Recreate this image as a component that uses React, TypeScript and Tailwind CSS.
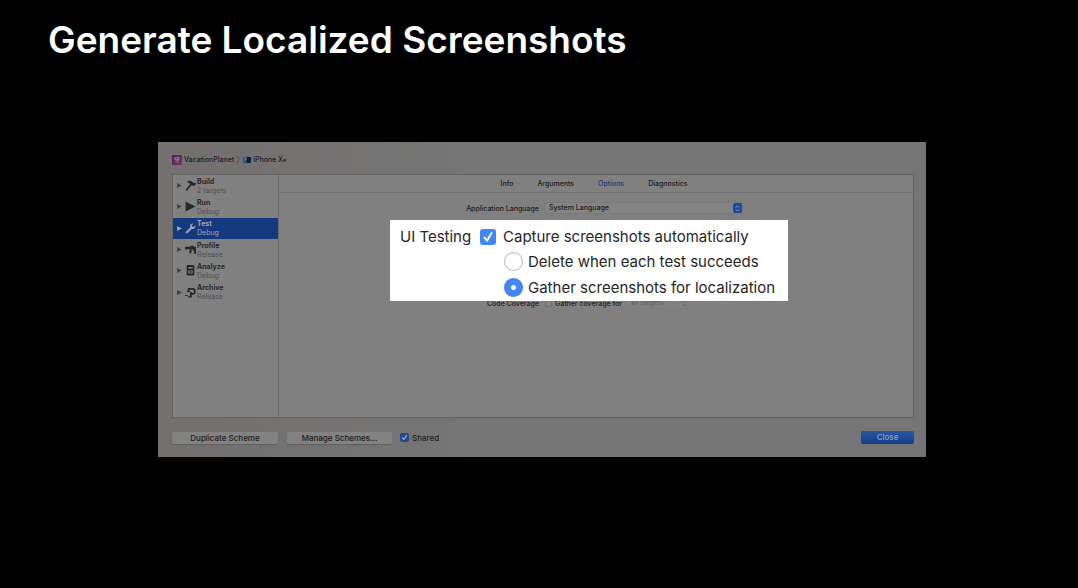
import type { ReactNode } from "react";

type Action = { name: string; detail: string; icon: ReactNode; selected?: boolean };

const HammerIcon = () => (
  <svg viewBox="0 0 20 20" className="size-[11px]" fill="currentColor" aria-hidden="true">
    <path d="M1 17.500 10 7l2.500 2.200L3.500 19.500z" />
    <path d="M3 3.500C7 .5 11 1 14 4l1.500 1.500L19 4.500l1 4-3.500 1.500-1.500 1.500L8 6C6.500 4.500 5 4 3 3.500z" />
  </svg>
);

const RunIcon = () => (
  <svg viewBox="0 0 20 20" className="size-[11px]" fill="currentColor" aria-hidden="true">
    <path d="M1 1v18l18-9z" />
  </svg>
);

const WrenchIcon = () => (
  <svg viewBox="0 0 20 20" className="size-[11px]" fill="currentColor" aria-hidden="true">
    <path d="M18.700 4.300 15.500 7.400 12.800 6.900 12.300 4.200 15.300 1.200C12.500.3 9 2.200 9 6.200c0 .8.1 1.500.4 2.100L1.700 15.900a1.800 1.800 0 0 0 2.600 2.600l7.700-7.700c4.300 1.400 8-2.500 6.700-6.500z" />
  </svg>
);

const CaliperIcon = () => (
  <svg viewBox="0 0 20 20" className="size-[11px]" fill="currentColor" aria-hidden="true">
    <path d="M0 5h10V3h6v2h4v4H0z" />
    <path d="M0 8h4v2H0zM8 8h4v7l-3 3-1-2z" />
    <path d="M14 8h6v10h-3l-1-6h-2z" />
  </svg>
);

const AnalyzeIcon = () => (
  <svg viewBox="0 0 20 20" className="size-[11px]" fill="currentColor" fillRule="evenodd" aria-hidden="true">
    <path d="M5 0h10q2 0 2 2v15q0 2-2 2H5q-2 0-2-2V2q0-2 2-2zM6 3.500v3h8v-3zM6 10v5.500h8V10z" />
    <path d="M8.500 11h3v3h-3z" />
  </svg>
);

const ClampIcon = () => (
  <svg viewBox="0 0 20 20" className="size-[11px]" fill="none" stroke="currentColor" aria-hidden="true">
    <path d="M6.500 9V3.500H14q4 0 4 4.500t-4 4.500h-3" strokeWidth="3" />
    <path d="M10.500 9v9.500" strokeWidth="3" />
    <path d="M0 15.500h5M5 18h7M4 8h5" strokeWidth="2" />
  </svg>
);

const AppIcon = () => (
  <svg viewBox="0 0 20 20" className="size-[10px]" aria-hidden="true">
    <defs>
      <linearGradient id="planet" x1="0" y1="0" x2="1" y2="1">
        <stop offset="0" stopColor="#48245c" />
        <stop offset="0.6" stopColor="#6a2c5c" />
        <stop offset="1" stopColor="#703c50" />
      </linearGradient>
    </defs>
    <rect width="20" height="20" fill="url(#planet)" />
    <path d="M4 5q6-3 11 0l-1 6-4 2-5-4z" fill="#856d85" />
    <path d="M6 15q4-3 8 0" fill="none" stroke="#806880" strokeWidth="1.500" />
    <circle cx="9" cy="7" r="1.200" fill="#592a58" />
  </svg>
);

const PhoneIcon = () => (
  <svg viewBox="0 0 20 16" className="h-[8px] w-[10px]" aria-hidden="true">
    <path d="M1 4 10 1l4 1-2 12-9 1z" fill="#205480" />
    <path d="M3 5 9 3l1 3-5 6z" fill="#39749c" />
    <rect x="10" y="2" width="8" height="12" rx="2" fill="#101820" transform="rotate(8 14 8)" />
  </svg>
);

const Stepper = () => (
  <svg viewBox="0 0 8 10" className="h-[9px] w-[7px]" fill="none" stroke="currentColor" strokeWidth="1" aria-hidden="true">
    <path d="M2 4 4 2l2 2M2 6l2 2 2-2" />
  </svg>
);

const Check = ({ className }: { className: string }) => (
  <svg viewBox="0 0 16 16" className={className} fill="none" strokeWidth="2" strokeLinecap="round" strokeLinejoin="round" aria-hidden="true">
    <path d="m4.500 8.500 2.500 3.200L11.500 4" />
  </svg>
);

const actions: Action[] = [
  { name: "Build", detail: "2 targets", icon: <HammerIcon /> },
  { name: "Run", detail: "Debug", icon: <RunIcon /> },
  { name: "Test", detail: "Debug", icon: <WrenchIcon />, selected: true },
  { name: "Profile", detail: "Release", icon: <CaliperIcon /> },
  { name: "Analyze", detail: "Debug", icon: <AnalyzeIcon /> },
  { name: "Archive", detail: "Release", icon: <ClampIcon /> },
];

const tabs = ["Info", "Arguments", "Options", "Diagnostics"];

function Sidebar() {
  return (
    <nav className="w-[106px] shrink-0 border-r border-[#6a6a6a]" aria-label="Scheme actions">
      <ul className="grid h-32 grid-rows-6">
        {actions.map((a) => (
          <li key={a.name}>
            <button
              className={
                a.selected
                  ? "flex h-full w-full items-center bg-[#15397f] pl-1 text-left text-[#a0a5b0]"
                  : "flex h-full w-full items-center pl-1 text-left text-[#282828]"
              }
            >
              <svg
                viewBox="0 0 10 10"
                className={a.selected ? "size-[5px] text-[#a0a5b0]" : "size-[5px] text-[#444]"}
                fill="currentColor"
                aria-hidden="true"
              >
                <path d="M0 0v10l10-5z" />
              </svg>
              <span className="ml-[3px]">{a.icon}</span>
              <span className="flex flex-col pl-px">
                <span className="text-[7px] leading-[9px] font-bold">{a.name}</span>
                <span className={a.selected ? "text-[7px] leading-[9px]" : "text-[7px] leading-[9px] text-[#505050]"}>
                  {a.detail}
                </span>
              </span>
            </button>
          </li>
        ))}
      </ul>
    </nav>
  );
}

function OptionsPane() {
  return (
    <div className="min-w-0 flex-1">
      <div
        className="flex h-[18px] items-center justify-center gap-6 border-b border-[#707070] pt-px pr-1 text-[7px] font-medium text-[#1c1c1c]"
        role="tablist"
      >
        {tabs.map((t) => (
          <button key={t} role="tab" aria-selected={t === "Options"} className={t === "Options" ? "text-[#173e7c]" : ""}>
            {t}
          </button>
        ))}
      </div>
      <form className="grid grid-cols-[41%_1fr] gap-x-[6px] pt-[10px] text-[7px] font-medium text-[#202020]">
        <label htmlFor="language" className="text-right leading-[11px]">
          Application Language
        </label>
        <div className="relative h-[11px] w-[197px]">
          <select
            id="language"
            className="block h-[10px] w-full appearance-none rounded-[2px] bg-[#848484] pl-1 leading-[10px] shadow-[0_0_1px_#555]"
          >
            <option>System Language</option>
          </select>
          <span className="pointer-events-none absolute top-0 right-0 flex h-[10px] w-[9px] items-center justify-center rounded-[2px] bg-[#1d4b9b] text-[#8fa4c8]">
            <Stepper />
          </span>
        </div>
        <span className="mt-[84px] text-right leading-[11px]">Code Coverage</span>
        <div className="mt-[84px] flex h-[11px] items-center">
          <input id="coverage" type="checkbox" className="size-[7px] appearance-none rounded-[1px] border border-[#707070] bg-[#848484]" />
          <label htmlFor="coverage" className="pl-[3px] leading-[11px]">
            Gather coverage for
          </label>
          <div className="relative ml-[5px] h-[11px] w-[61px]">
            <select
              aria-label="Coverage targets"
              disabled
              className="block h-[10px] w-full appearance-none rounded-[2px] bg-[#828282] pl-1 leading-[10px] text-[#646464] opacity-100 shadow-[0_0_1px_#666]"
            >
              <option>all targets</option>
            </select>
            <span className="pointer-events-none absolute inset-y-0 right-0 flex items-center text-[#5c5c5c]">
              <Stepper />
            </span>
          </div>
        </div>
      </form>
    </div>
  );
}

function Callout() {
  return (
    <fieldset className="absolute top-[78px] left-[232px] flex h-[81px] w-[398px] items-start bg-white pt-1 pl-[10px] text-[15px] text-[#262626]">
      <span className="w-20 leading-[26px]">UI Testing</span>
      <div>
        <div className="flex h-[25px] items-center">
          <span className="relative flex size-4">
            <input id="capture" type="checkbox" defaultChecked className="size-4 appearance-none rounded-[3px] bg-[#4285f5]" />
            <Check className="pointer-events-none absolute inset-0 size-4 stroke-white" />
          </span>
          <label htmlFor="capture" className="pt-px pl-[7px]">
            Capture screenshots automatically
          </label>
        </div>
        <div className="flex h-[25px] items-center pl-6">
          <input id="delete" name="retention" type="radio" className="size-[19px] appearance-none rounded-full border border-[#b8b8b8] bg-white" />
          <label htmlFor="delete" className="pt-px pl-[5px]">
            Delete when each test succeeds
          </label>
        </div>
        <div className="flex h-[27px] items-center pl-6">
          <input
            id="gather"
            name="retention"
            type="radio"
            defaultChecked
            className="size-[19px] appearance-none rounded-full border-[7px] border-[#4285f5] bg-white"
          />
          <label htmlFor="gather" className="pt-px pl-[5px]">
            Gather screenshots for localization
          </label>
        </div>
      </div>
    </fieldset>
  );
}

export default function App() {
  return (
    <main className="min-h-screen bg-black font-['Inter',sans-serif]">
      <h1 className="px-12 pt-4 text-[37px] leading-[48px] font-semibold text-white">Generate Localized Screenshots</h1>
      <section className="relative mt-[78px] mr-[152px] ml-[158px] h-[315px] bg-linear-to-r from-[#73706e] to-[#757575] to-40% pt-3 pr-3 pl-[14px]">
        <div className="flex h-[11px] items-center text-[7px] font-medium text-[#202020]">
          <AppIcon />
          <span className="pt-px pl-[2px]">VacationPlanet</span>
          <svg viewBox="0 0 6 12" className="ml-[2px] h-[9px] w-[5px]" fill="none" stroke="#444" strokeWidth="1" aria-hidden="true">
            <path d="m1 1 3 5-3 5" />
          </svg>
          <span className="pl-px">
            <PhoneIcon />
          </span>
          <span className="pt-px pl-px">
            iPhone X<span className="text-[6px]">ʀ</span>
          </span>
        </div>
        <div className="mt-[9px] flex h-[244px] border border-[#646464] bg-[#808080]">
          <Sidebar />
          <OptionsPane />
        </div>
        <footer className="flex items-center pt-[13px] text-[8px] font-medium text-[#202020]">
          <button className="h-[12px] w-[106px] rounded-[2px] bg-[#828282] leading-[12px] shadow-[0_1px_1px_#606060]">Duplicate Scheme</button>
          <button className="ml-[9px] h-[12px] w-[105px] rounded-[2px] bg-[#828282] leading-[12px] shadow-[0_1px_1px_#606060]">Manage Schemes...</button>
          <span className="relative ml-2 flex size-[9px]">
            <input id="shared" type="checkbox" defaultChecked className="size-[9px] appearance-none rounded-[2px] bg-[#214a92]" />
            <Check className="pointer-events-none absolute inset-0 size-[9px] stroke-[#a5adbd]" />
          </span>
          <label htmlFor="shared" className="pl-[3px]">
            Shared
          </label>
          <button className="ml-auto h-[13px] w-[53px] rounded-[2px] bg-linear-to-b from-[#2a569f] to-[#143e8c] leading-[13px] text-[#8e9fbd]">Close</button>
        </footer>
        <Callout />
      </section>
    </main>
  );
}
